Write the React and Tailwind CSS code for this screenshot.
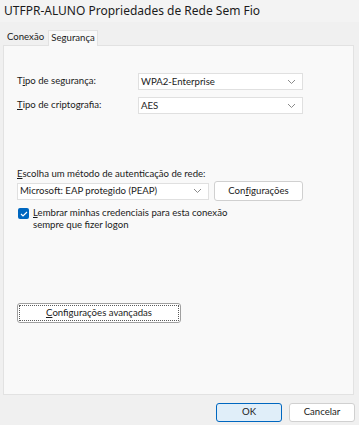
import React from 'react';

const font = { fontFamily: 'Lato, "Noto Sans", sans-serif' };

function Chevron() {
  return (
    <svg width="9" height="6" viewBox="0 0 9 6" className="shrink-0">
      <path d="M1 1l3.5 3.5L8 1" fill="none" stroke="#8a8a8a" strokeWidth="1" />
    </svg>
  );
}

function Select({ value, className }) {
  return (
    <div
      className={`h-[17px] bg-white border border-[#e0e0e0] flex items-center justify-between pl-[2px] pr-[6px] ${className}`}
    >
      <span className="leading-none">{value}</span>
      <Chevron />
    </div>
  );
}

function Btn({ children, className }) {
  return (
    <div
      className={`flex items-center justify-center bg-white border border-[#d0d0d0] rounded-[3px] ${className}`}
    >
      {children}
    </div>
  );
}

export default function App() {
  return (
    <div
      className="w-[359px] h-[425px] bg-[#f0f0f0] text-[9.6px] text-[#1b1b1b] flex flex-col overflow-hidden"
      style={font}
    >
      {/* title bar */}
      <div
        className="h-[22px] bg-[#f3f3f3] flex items-center pl-[4px] text-[12px] text-[#1b1b1b]"
        style={{ fontFamily: '"Noto Sans", sans-serif' }}
      >
        UTFPR-ALUNO Propriedades de Rede Sem Fio
      </div>

      {/* tabs */}
      <div className="h-[23px] flex items-end pl-[3px]">
        <div className="h-[16px] px-[4px] flex items-center">Conexão</div>
        <div className="h-[16px] w-[50px] flex items-center justify-center bg-[#f9f9f9] border border-b-0 border-[#e2e2e2] mb-[-1px] relative z-10">
          Segurança
        </div>
      </div>

      {/* panel */}
      <div className="ml-[3px] w-[351px] h-[350px] bg-[#f9f9f9] border border-[#e2e2e2] pl-[13px] pt-[27px]">
        <div className="flex items-center">
          <div className="w-[121px]">
            T<span className="underline">i</span>po de segurança:
          </div>
          <Select value="WPA2-Enterprise" className="w-[165px]" />
        </div>
        <div className="flex items-center mt-[7px]">
          <div className="w-[121px]">
            <span className="underline">T</span>ipo de criptografia:
          </div>
          <Select value="AES" className="w-[165px]" />
        </div>

        <div className="mt-[53px] leading-[14px]">
          <span className="underline">E</span>scolha um método de autenticação de rede:
        </div>
        <div className="flex items-center">
          <Select value="Microsoft: EAP protegido (PEAP)" className="w-[192px]" />
          <Btn className="ml-[5px] w-[89px] h-[20px]">
            Con<span className="underline">f</span>igurações
          </Btn>
        </div>

        <div className="flex items-start mt-[6px] ml-[1px]">
          <div className="w-[11px] h-[11px] rounded-[2px] bg-[#0067c0] flex items-center justify-center mt-[1px] shrink-0">
            <svg width="8" height="6" viewBox="0 0 8 6">
              <path d="M1 3l2 2 4-4" fill="none" stroke="white" strokeWidth="1.1" />
            </svg>
          </div>
          <div className="ml-[4px] leading-[12px]">
            <span className="underline">L</span>embrar minhas credenciais para esta conexão
            <br />
            sempre que fizer logon
          </div>
        </div>

        <div className="mt-[72px] w-[164px] h-[20px] bg-white border border-[#a0a0a0] rounded-[3px] flex items-center justify-center p-[1px]">
          <div className="w-full h-full border border-dotted border-[#5a5a5a] flex items-center justify-center">
            <span className="underline">C</span>onfigurações avançadas
          </div>
        </div>
      </div>

      {/* footer */}
      <div className="flex justify-end pr-[4px] pt-[8px] gap-[7px]">
        <div className="w-[66px] h-[19px] bg-[#e0eef9] border border-[#0067c0] rounded-[3px] flex items-center justify-center">
          OK
        </div>
        <Btn className="w-[66px] h-[19px]">Cancelar</Btn>
      </div>
    </div>
  );
}
